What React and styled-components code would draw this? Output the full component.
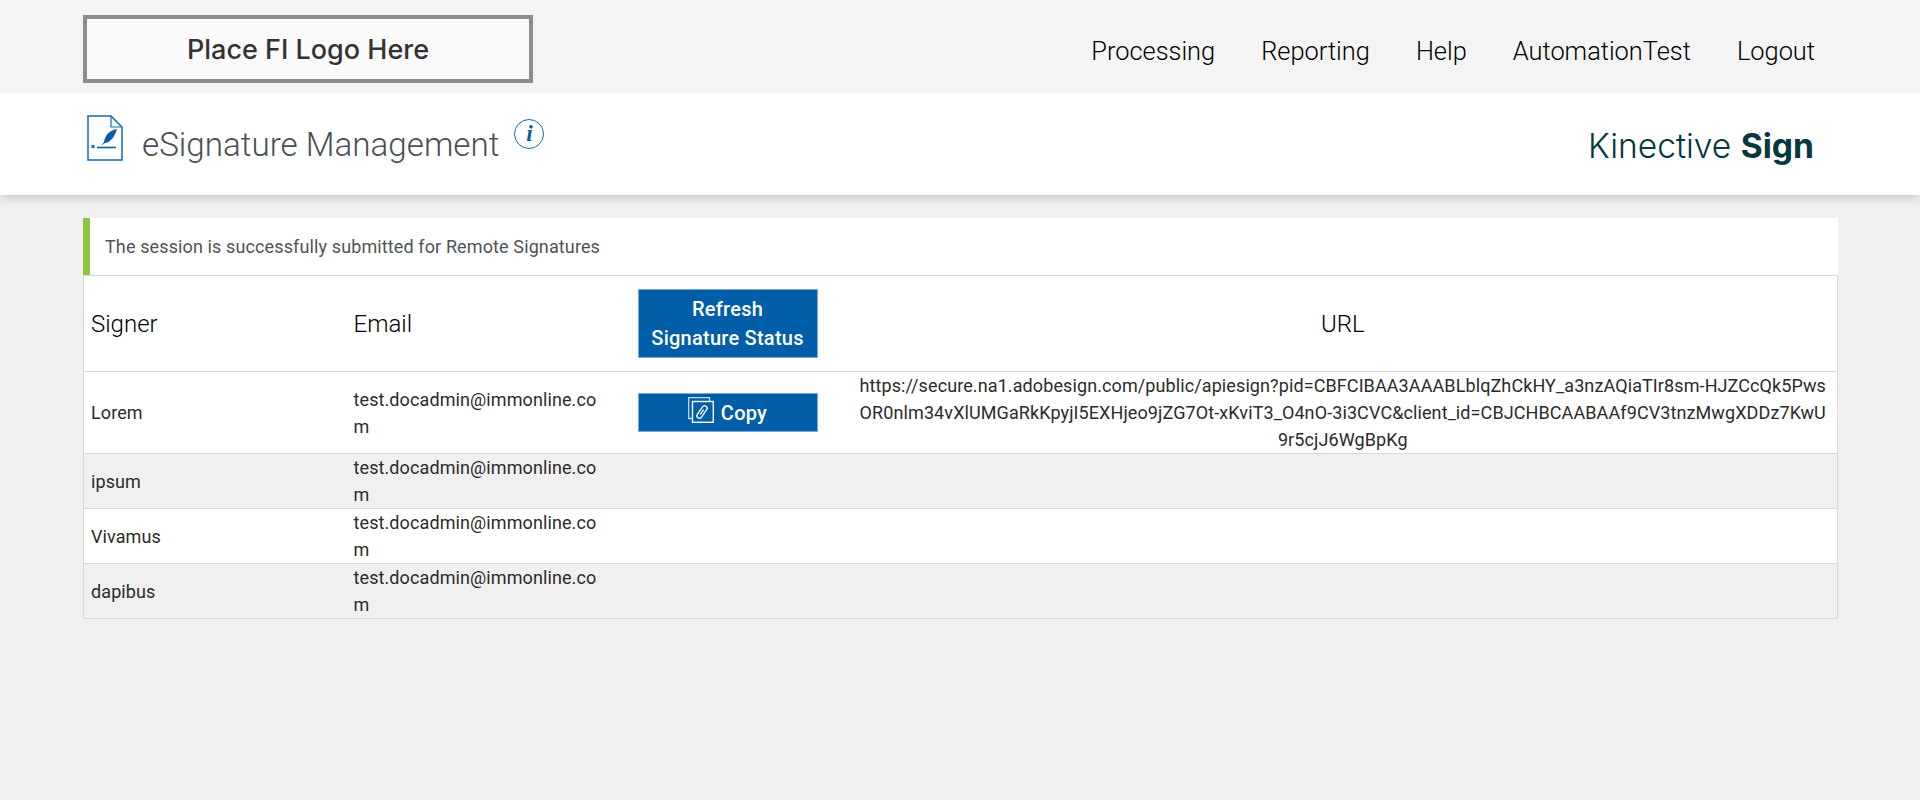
import React from 'react';
import styled, { createGlobalStyle } from 'styled-components';

const GlobalStyle = createGlobalStyle`
  html, body { margin: 0; padding: 0; }
  body {
    background: #f0f0f0;
    font-family: Roboto, "Liberation Sans", sans-serif;
  }
`;

const TopBar = styled.header`
  height: 93px;
  box-sizing: border-box;
  background: #f4f4f4;
  padding: 15px 105px 0 83px;
  display: flex;
  justify-content: space-between;
  position: relative;
  z-index: 1;
`;

const LogoBox = styled.div`
  width: 450px;
  height: 68px;
  box-sizing: border-box;
  border: 4px solid #8c8c8c;
  background: #fafafa;
  color: #333;
  display: flex;
  align-items: center;
  justify-content: center;
  font: 500 27px Inter, sans-serif;
`;

const Nav = styled.nav`
  display: flex;
  gap: 46px;
  padding-top: 20px;
`;

const NavLink = styled.a`
  font-size: 25.4px;
  font-weight: 300;
  line-height: 33px;
  color: #000;
`;

const TitleBar = styled.div`
  height: 102px;
  box-sizing: border-box;
  background: #fff;
  box-shadow: 0 2px 10px rgba(0, 0, 0, 0.2);
  padding: 0 106px 0 87px;
  display: flex;
  justify-content: space-between;
`;

const TitleGroup = styled.div`
  display: flex;
  align-items: flex-start;
`;

const PageIcon = styled.svg`
  width: 36px;
  height: 46px;
  margin-top: 22px;
`;

const PageTitle = styled.h1`
  margin: 31px 0 0 19px;
  font-size: 33.2px;
  font-weight: 300;
  line-height: 42px;
  color: #4a4f55;
`;

const InfoBadge = styled.span`
  width: 30px;
  height: 30px;
  box-sizing: border-box;
  margin: 26px 0 0 15px;
  border: 1px solid #0f6cb0;
  border-radius: 50%;
  color: #0a5ea8;
  display: flex;
  align-items: center;
  justify-content: center;
  font: italic 700 23px "Liberation Serif", serif;
`;

const Brand = styled.div`
  margin-top: 31px;
  font-family: Inter, sans-serif;
  font-size: 33.6px;
  font-weight: 300;
  line-height: 44px;
  color: #05383d;

  b { font-weight: 700; }
`;

const Content = styled.main`
  margin: 23px 82px 0 83px;
`;

const Alert = styled.div`
  height: 57px;
  box-sizing: border-box;
  background: #fff;
  border-left: 7px solid #8cc63f;
  padding-left: 15px;
  display: flex;
  align-items: center;
  font-size: 18px;
  letter-spacing: 0.12px;
  color: #4f5358;
`;

const Table = styled.table`
  width: 100%;
  table-layout: fixed;
  border-collapse: collapse;
  border: 1px solid #d9d9d9;
  color: #2b2b2b;
`;

const Row = styled.tr`
  background: ${p => (p.$shaded ? '#f0f0f0' : '#fff')};
  border-top: 1px solid #d9d9d9;
`;

const Head = styled.th`
  height: 95px;
  padding: 0 7px;
  font-size: 24px;
  font-weight: 300;
  color: #000;
  text-align: ${p => (p.$center ? 'center' : 'left')};
`;

const Cell = styled.td`
  padding: 0 7px;
  font-size: 18px;
  line-height: 27px;
  letter-spacing: 0.1px;
  word-break: break-all;
  vertical-align: middle;
  text-align: ${p => (p.$center ? 'center' : 'left')};
`;

const BlueButton = styled.button`
  display: flex;
  align-items: center;
  justify-content: center;
  gap: 7px;
  width: 180px;
  height: ${p => p.$height}px;
  margin-left: 16px;
  padding: 0;
  border: 1px solid #7fa9d0;
  background: #005ea8;
  color: #fff;
  font: 500 20px/29px Roboto, sans-serif;
  letter-spacing: 0.25px;
`;

const CopyLabel = styled.span`
  padding-top: 2px;
`;

const signers = ['Lorem', 'ipsum', 'Vivamus', 'dapibus'];
const url = 'https://secure.na1.adobesign.com/public/apiesign?pid=CBFCIBAA3AAABLblqZhCkHY_a3nzAQiaTIr8sm-HJZCcQk5PwsOR0nlm34vXlUMGaRkKpyjI5EXHjeo9jZG7Ot-xKviT3_O4nO-3i3CVC&client_id=CBJCHBCAABAAf9CV3tnzMwgXDDz7KwU9r5cjJ6WgBpKg';

function DocIcon() {
  return (
    <PageIcon viewBox="0 0 36 46" fill="none">
      <path d="M1 1h23l11 11v33H1z" stroke="#0f6cb0" strokeWidth="1.5" />
      <path d="M24 1v11h11" stroke="#0f6cb0" strokeWidth="1.2" />
      <path d="M30 14c-7 1-12 6-13 13l-2.3 3.500 3.300-2.500c6-1 10-7 12-14z" fill="#0a5ea8" />
      <path d="M10 32.500h19" stroke="#0a5ea8" strokeWidth="1.600" />
      <path d="M4.500 30l3 3M7.500 30l-3 3" stroke="#0a5ea8" strokeWidth="1.200" />
    </PageIcon>
  );
}

function CopyIcon() {
  return (
    <svg width="26" height="26" viewBox="0 0 26 26" fill="none" stroke="#fff" style={{ marginTop: -5 }}>
      <path d="M4 21.500H.7V.7h20.800V4" stroke="#c4d8ea" strokeWidth="1.300" />
      <rect x="4.500" y="4.500" width="20.800" height="20.800" strokeWidth="1.400" />
      <g transform="rotate(35 14 15)" strokeWidth="1.300">
        <rect x="11.500" y="8" width="5" height="14" rx="2.500" />
        <path d="M14 12v6" />
      </g>
    </svg>
  );
}

export default function App() {
  return (
    <>
      <GlobalStyle />
      <TopBar>
        <LogoBox>Place FI Logo Here</LogoBox>
        <Nav>
          <NavLink>Processing</NavLink>
          <NavLink>Reporting</NavLink>
          <NavLink>Help</NavLink>
          <NavLink>AutomationTest</NavLink>
          <NavLink>Logout</NavLink>
        </Nav>
      </TopBar>
      <TitleBar>
        <TitleGroup>
          <DocIcon />
          <PageTitle>eSignature Management</PageTitle>
          <InfoBadge>i</InfoBadge>
        </TitleGroup>
        <Brand>Kinective <b>Sign</b></Brand>
      </TitleBar>
      <Content>
        <Alert>The session is successfully submitted for Remote Signatures</Alert>
        <Table>
          <colgroup>
            <col style={{ width: 263 }} />
            <col style={{ width: 268 }} />
            <col style={{ width: 234 }} />
            <col />
          </colgroup>
          <thead>
            <Row>
              <Head>Signer</Head>
              <Head>Email</Head>
              <Head>
                <BlueButton $height={69}>Refresh<br />Signature Status</BlueButton>
              </Head>
              <Head $center>URL</Head>
            </Row>
          </thead>
          <tbody>
            {signers.map((name, i) => (
              <Row key={name} $shaded={i % 2 === 1}>
                <Cell>{name}</Cell>
                <Cell>test.docadmin@immonline.com</Cell>
                <Cell>
                  {i === 0 && <BlueButton $height={39}><CopyIcon /><CopyLabel>Copy</CopyLabel></BlueButton>}
                </Cell>
                <Cell $center>{i === 0 && url}</Cell>
              </Row>
            ))}
          </tbody>
        </Table>
      </Content>
    </>
  );
}
